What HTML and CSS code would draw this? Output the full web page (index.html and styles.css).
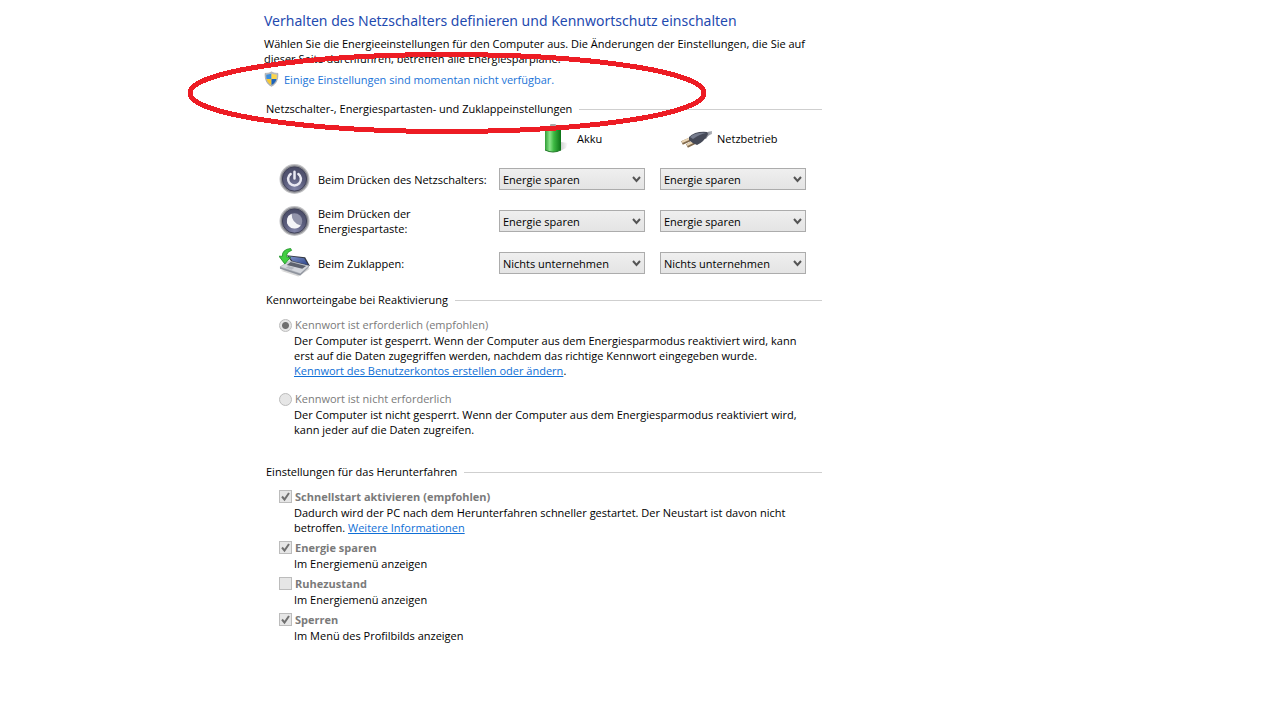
FILE: index.html
```html
<!DOCTYPE html>
<html lang="de">
<head>
<meta charset="utf-8">
<meta name="viewport" content="width=device-width, initial-scale=1">
<title>Energieoptionen</title>
<link rel="stylesheet" href="styles.css">
</head>
<body>
<main class="page">
  <h1 class="title">Verhalten des Netzschalters definieren und Kennwortschutz einschalten</h1>
  <p class="intro">Wählen Sie die Energieeinstellungen für den Computer aus. Die Änderungen der Einstellungen, die Sie auf<br>dieser Seite durchführen, betreffen alle Energiesparpläne.</p>
  <a class="admin-link" href="#">
    <svg class="shield" viewBox="0 0 16 16" aria-hidden="true">
      <path d="M8 .4C6 1.700 3.600 2 1.200 2C1 8.500 2.600 13 8 15.800C13.400 13 15 8.500 14.800 2C12.400 2 10 1.700 8 .4Z" fill="#b9bcc0" stroke="#8d9296" stroke-width=".6"/>
      <path d="M8 2.200V8H2.700C2.400 6.500 2.300 5 2.400 3.400C4.600 3.400 6.500 3 8 2.200Z" fill="#3b8ede"/>
      <path d="M8 2.200V8H13.300C13.600 6.500 13.700 5 13.600 3.400C11.400 3.400 9.500 3 8 2.200Z" fill="#fbd64c"/>
      <path d="M8 8H2.700C3.300 11 5.200 13.100 8 14.500Z" fill="#f6c832"/>
      <path d="M8 8H13.300C12.700 11 10.800 13.100 8 14.500Z" fill="#1c62b8"/>
    </svg>
    <span>Einige Einstellungen sind momentan nicht verfügbar.</span>
  </a>

  <section class="group group-buttons">
    <h2 class="group-title">Netzschalter-, Energiespartasten- und Zuklappeinstellungen</h2>
    <div class="power-grid">
      <div class="source source-battery">
        <svg class="source-icon" viewBox="0 0 32 32" aria-hidden="true">
          <defs>
            <linearGradient id="battery" x2="1"><stop offset="0" stop-color="#2f9d35"/><stop offset=".3" stop-color="#8be58a"/><stop offset=".55" stop-color="#3db943"/><stop offset="1" stop-color="#0b7216"/></linearGradient>
            <linearGradient id="shade" x2="1"><stop offset="0" stop-color="#aaa"/><stop offset="1" stop-color="#fff"/></linearGradient>
          </defs>
          <path d="M21 20L28 21L26 26L20 29Z" fill="url(#shade)" opacity=".6"/>
          <rect x="10" y="2" width="6" height="4" rx="1" fill="#aaa"/>
          <path d="M5 6Q13 3 21 6V28Q13 32 5 28Z" fill="url(#battery)"/>
          <path d="M5 28Q13 32 21 28" fill="none" stroke="#247b2a"/>
        </svg>
        <span>Akku</span>
      </div>
      <div class="source source-mains">
        <svg class="source-icon" viewBox="0 0 32 32" aria-hidden="true">
          <defs><linearGradient id="cord" x2="1"><stop offset="0" stop-color="#555965"/><stop offset="1" stop-color="#b5b8be"/></linearGradient></defs>
          <path d="M22 15Q24 10 32 9V12Q28 13 26 17Z" fill="url(#cord)"/>
          <path d="M2 21L11 17M7 24L15 20" stroke="#80694c" stroke-width="4"/>
          <path d="M2 20L11 16M7 23L15 19" stroke="#ead6b5" stroke-width="2"/>
          <path d="M9 15Q15 9 27 10L28 12Q24 20 17 23Q13 22 9 18Z" fill="#454957"/>
          <path d="M10 15Q16 10 26 11Q20 12 13 17Z" fill="#767c8d"/>
        </svg>
        <span>Netzbetrieb</span>
      </div>

      <div class="action">
        <svg class="action-icon" viewBox="0 0 32 32" aria-hidden="true">
          <defs><radialGradient id="knob" cx=".5" cy=".9" r=".9"><stop offset="0" stop-color="#8285a8"/><stop offset=".5" stop-color="#5b5d7c"/><stop offset="1" stop-color="#494b66"/></radialGradient></defs>
          <circle cx="16" cy="16" r="15.500" fill="#c2c2c5"/><circle cx="16" cy="16" r="14.300" fill="#8b8c92"/>
          <circle cx="16" cy="16" r="12.500" fill="url(#knob)" stroke="#3f4058"/>
          <path d="M12 10.800A6.600 6.600 0 1 0 20 10.800M16 8.500V15.500" fill="none" stroke="#e9e9f2" stroke-width="2.600" stroke-linecap="round"/>
        </svg>
        <span>Beim Drücken des Netzschalters:</span>
      </div>
      <select class="choice" aria-label="Netzschalter, Akku"><option>Energie sparen</option><option>Nichts unternehmen</option></select>
      <select class="choice" aria-label="Netzschalter, Netzbetrieb"><option>Energie sparen</option><option>Nichts unternehmen</option></select>

      <div class="action">
        <svg class="action-icon" viewBox="0 0 32 32" aria-hidden="true">
          <circle cx="16" cy="16" r="15.500" fill="#c2c2c5"/><circle cx="16" cy="16" r="14.300" fill="#8b8c92"/>
          <circle cx="16" cy="16" r="12.500" fill="url(#knob)" stroke="#3f4058"/>
          <circle cx="16" cy="16" r="8" fill="#9294aa"/>
          <path d="M13 8.500A8 8 0 1 0 22.500 20.700Q13 18 13 8.500Z" fill="#f5f5f8"/>
        </svg>
        <span>Beim Drücken der<br>Energiespartaste:</span>
      </div>
      <select class="choice" aria-label="Energiespartaste, Akku"><option>Energie sparen</option><option>Nichts unternehmen</option></select>
      <select class="choice" aria-label="Energiespartaste, Netzbetrieb"><option>Energie sparen</option><option>Nichts unternehmen</option></select>

      <div class="action">
        <svg class="action-icon" viewBox="0 0 32 32" aria-hidden="true">
          <defs><linearGradient id="screen" x2="1" y2="1"><stop offset="0" stop-color="#8397cc"/><stop offset="1" stop-color="#2b4388"/></linearGradient></defs>
          <path d="M2 24L20 30L32 22L24 19Z" fill="#999" opacity=".4"/>
          <path d="M8 8L27 10L32 19L13 15Z" fill="#343944"/>
          <path d="M10 9L26 11L30 18L14 14Z" fill="url(#screen)"/>
          <path d="M11 14L31 19L22 27L1 20Z" fill="#d3d6dc" stroke="#9ba0a9" stroke-width=".6"/>
          <path d="M12 15L28 19L24 22L8 18Z" fill="#5d626e"/>
          <path d="M10 19L16 21L13 23L7 21Z" fill="#b5b9c1"/>
          <path d="M1 20L22 27L31 19V20L22 29L1 22Z" fill="#8e939d"/>
          <path d="M12 1Q3 2 3.500 9L0 9L6 17L12 10L8 10Q7 5 13 3Z" fill="#42cf42" stroke="#168b20" stroke-width=".8"/>
        </svg>
        <span>Beim Zuklappen:</span>
      </div>
      <select class="choice" aria-label="Zuklappen, Akku"><option>Nichts unternehmen</option><option>Energie sparen</option></select>
      <select class="choice" aria-label="Zuklappen, Netzbetrieb"><option>Nichts unternehmen</option><option>Energie sparen</option></select>
    </div>
  </section>

  <section class="group group-password">
    <h2 class="group-title">Kennworteingabe bei Reaktivierung</h2>
    <div class="option">
      <label class="option-label"><input class="radio" type="radio" name="password" checked disabled>Kennwort ist erforderlich (empfohlen)</label>
      <p class="hint">Der Computer ist gesperrt. Wenn der Computer aus dem Energiesparmodus reaktiviert wird, kann<br>erst auf die Daten zugegriffen werden, nachdem das richtige Kennwort eingegeben wurde.<br><a class="link" href="#">Kennwort des Benutzerkontos erstellen oder ändern</a>.</p>
    </div>
    <div class="option">
      <label class="option-label"><input class="radio" type="radio" name="password" disabled>Kennwort ist nicht erforderlich</label>
      <p class="hint">Der Computer ist nicht gesperrt. Wenn der Computer aus dem Energiesparmodus reaktiviert wird,<br>kann jeder auf die Daten zugreifen.</p>
    </div>
  </section>

  <section class="group group-shutdown">
    <h2 class="group-title">Einstellungen für das Herunterfahren</h2>
    <div class="option">
      <label class="option-label"><input class="check" type="checkbox" checked disabled>Schnellstart aktivieren (empfohlen)</label>
      <p class="hint">Dadurch wird der PC nach dem Herunterfahren schneller gestartet. Der Neustart ist davon nicht<br>betroffen. <a class="link" href="#">Weitere Informationen</a></p>
    </div>
    <div class="option">
      <label class="option-label"><input class="check" type="checkbox" checked disabled>Energie sparen</label>
      <p class="hint">Im Energiemenü anzeigen</p>
    </div>
    <div class="option">
      <label class="option-label"><input class="check" type="checkbox" disabled>Ruhezustand</label>
      <p class="hint">Im Energiemenü anzeigen</p>
    </div>
    <div class="option">
      <label class="option-label"><input class="check" type="checkbox" checked disabled>Sperren</label>
      <p class="hint">Im Menü des Profilbilds anzeigen</p>
    </div>
  </section>

  <svg class="marker" viewBox="0 0 520 82" aria-hidden="true"><ellipse cx="260" cy="41" rx="257" ry="38.500"/></svg>
</main>
</body>
</html>
```
FILE: styles.css
```css
* { box-sizing: border-box; }
body {
  margin: 0;
  background: #fff;
  color: #000;
  font: 11px/15px "Open Sans", "Noto Sans", sans-serif;
}
h1, h2, p { margin: 0; font-weight: 400; }
.page {
  position: relative;
  max-width: 822px;
  padding: 8px 0 32px 264px;
  white-space: nowrap;
}
.title { font-family: "Noto Sans", sans-serif; font-size: 14px; line-height: 26px; color: #1f4bb0; }
.intro { margin-top: 2px; }
.admin-link {
  display: flex;
  align-items: center;
  gap: 5px;
  height: 16px;
  margin-top: 5px;
  color: #1b74d8;
  text-decoration: none;
}
.shield { width: 15px; height: 16px; }
.group { padding-left: 2px; }
.group-buttons { margin-top: 14px; }
.group-password { margin-top: 8px; }
.group-shutdown { margin-top: 27px; }
.group-title {
  display: flex;
  align-items: center;
  gap: 7px;
  font-size: 11px;
  line-height: 16px;
}
.group-title::after { content: ""; flex: 1; height: 1px; background: #cfcfcf; }

.power-grid {
  display: grid;
  grid-template-columns: 205px 146px 146px;
  grid-template-rows: 36px;
  grid-auto-rows: 42px;
  column-gap: 15px;
  align-items: center;
  padding: 5px 0 0 13px;
}
.source { display: flex; align-items: center; align-self: start; gap: 5px; }
.source-battery { grid-column: 2; padding-left: 41px; }
.source-mains { grid-column: 3; padding-left: 20px; }
.source-icon { width: 32px; height: 32px; }
.action { display: flex; align-items: center; gap: 8px; }
.action-icon { flex: none; width: 31px; height: 32px; }
.choice {
  appearance: none;
  width: 100%;
  height: 22px;
  padding: 0 20px 0 3px;
  border: 1px solid #acacac;
  border-radius: 0;
  background:
    url("data:image/svg+xml,%3Csvg xmlns='http://www.w3.org/2000/svg' width='9' height='7'%3E%3Cpath d='M1 1L4.500 5L8 1' fill='none' stroke='%23555' stroke-width='2'/%3E%3C/svg%3E") no-repeat right 3px center,
    linear-gradient(#efefef, #e4e4e4);
  color: #000;
  font: inherit;
}

.option { padding-left: 13px; }
.option-label { display: flex; align-items: center; gap: 3px; line-height: 16px; color: #7a7a7a; }
.hint { padding-left: 15px; }
.link { color: #0f6fd6; text-decoration: underline; }
.group-password .option { margin-top: 9px; }
.group-password .option + .option { margin-top: 13px; }
.group-shutdown .option { margin-top: 4px; }
.group-shutdown .group-title + .option { margin-top: 8px; }
.group-shutdown .option-label { line-height: 17px; font-weight: 700; }
.radio, .check {
  appearance: none;
  flex: none;
  width: 13px;
  height: 13px;
  margin: 0;
  border: 1px solid #bcbcbc;
  background: #e6e6e6;
}
.radio { border-radius: 50%; }
.radio:checked { background: radial-gradient(circle, #707070 0 3px, #e6e6e6 4px); }
.check:checked {
  background: #e6e6e6 url("data:image/svg+xml,%3Csvg xmlns='http://www.w3.org/2000/svg' width='11' height='11'%3E%3Cpath d='M2 5.500L4.500 8.500L9 2' fill='none' stroke='%23707070' stroke-width='2'/%3E%3C/svg%3E") no-repeat center;
}
.marker {
  position: absolute;
  left: 187px;
  top: 52px;
  width: 520px;
  height: 82px;
  pointer-events: none;
}
.marker ellipse { fill: none; stroke: #ed1c24; stroke-width: 5; shape-rendering: crispEdges; }
```
